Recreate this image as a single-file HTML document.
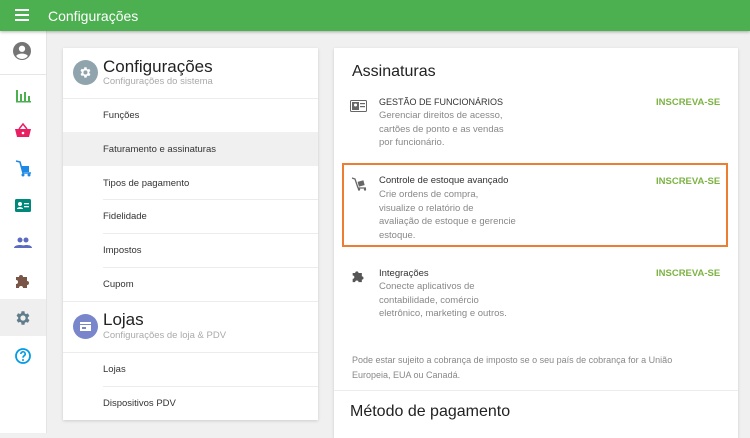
<!DOCTYPE html>
<html><head><meta charset="utf-8"><style>
*{margin:0;padding:0;box-sizing:border-box}
body{width:750px;height:433px;overflow:hidden;background:#f0f0f0;font-family:"Liberation Sans",sans-serif;position:relative;color:#333}
.hdr{position:absolute;left:0;top:0;width:750px;height:31px;background:#4caf50;box-shadow:0 1px 3px rgba(0,0,0,.3);z-index:2}
.hdr .t{position:absolute;left:48px;top:8px;color:#fff;font-size:14px}
.side{position:absolute;left:0;top:31px;width:47px;height:402px;background:#fff;border-right:1px solid #e4e4e4}
.ic{position:absolute;left:14px;width:18px;height:18px}
.card{position:absolute;background:#fff;box-shadow:0 1px 3px rgba(0,0,0,.15)}
.it{position:absolute;left:40px;font-size:9.5px;color:#333}
.ln{position:absolute;left:40px;right:0;height:1px;background:#ececec}
.abs{position:absolute}
.g{color:#888;font-size:9.5px;line-height:13.5px}
.ins{position:absolute;left:322px;color:#7cb342;font-weight:bold;font-size:9.5px}
</style></head><body>
<div class="hdr">
<svg class="abs" style="left:15px;top:9px" width="14" height="12"><rect y="0" width="14" height="2" fill="#fff"/><rect y="5" width="14" height="2" fill="#fff"/><rect y="10" width="14" height="2" fill="#fff"/></svg>
<div class="t">Configurações</div></div>
<div class="side">
<svg class="ic" style="top:11px;left:13px" width="20" height="20" viewBox="0 0 20 20"><circle cx="10" cy="10" r="10" fill="#757575"/><circle cx="10" cy="7.5" r="3.5" fill="#fff"/><path d="M3.5 15.5c2-3.5 11-3.5 13 0a8 8 0 0 1-13 0z" fill="#fff"/></svg>
<div class="abs" style="left:0;top:43px;width:46px;height:1px;background:#e6e6e6"></div>
<svg class="ic" style="top:55px" viewBox="0 0 18 18"><path d="M2 4h2v11H2zM6 8h2v7H6zM10 6h2v9h-2zM14 10h2v5h-2zM2 15h15v1.5H2z" fill="#4caf50"/></svg>
<svg class="ic" style="top:91px" viewBox="0 0 18 18"><path d="M1 7h16l-2 8H3z" fill="#e91e63"/><path d="M5 7l4-5 4 5" stroke="#e91e63" stroke-width="1.5" fill="none"/><circle cx="9" cy="11" r="1.3" fill="#fff"/></svg>
<svg class="ic" style="top:128px" viewBox="0 0 18 18"><path d="M2 2l4 1 3 11h8" stroke="#1e88e5" stroke-width="1.6" fill="none"/><rect x="8" y="7" width="7" height="6" fill="#1e88e5"/><circle cx="9" cy="16" r="1.5" fill="#1e88e5"/><circle cx="15" cy="16" r="1.5" fill="#1e88e5"/></svg>
<svg class="ic" style="top:166px" viewBox="0 0 18 18"><rect x="1" y="2" width="16" height="13" rx="1.5" fill="#00897b"/><circle cx="6" cy="7" r="2" fill="#fff"/><path d="M3 12c0-2.5 6-2.5 6 0z" fill="#fff"/><rect x="10" y="6" width="5" height="1.3" fill="#fff"/><rect x="10" y="9" width="5" height="1.3" fill="#fff"/></svg>
<svg class="ic" style="top:203px" viewBox="0 0 18 18"><circle cx="6" cy="6" r="2.5" fill="#5c6bc0"/><circle cx="12" cy="6" r="2.5" fill="#5c6bc0"/><path d="M0 14c0-4 12-4 12 0zM7 14c0-4 11-4 11 0z" fill="#5c6bc0"/></svg>
<svg class="ic" style="top:240px" viewBox="0 0 18 18"><path d="M2 6h3a2 2 0 1 1 4 0h4v4a2 2 0 1 1 0 4v3H9a2 2 0 1 0-4 0H2v-4a2 2 0 1 0 0-4z" fill="#795548"/></svg>
<div class="abs" style="left:0;top:268px;width:46px;height:37px;background:#efefef"></div>
<svg class="ic" style="top:278px" viewBox="0 0 24 24"><path fill="#607d8b" d="M19.4 13a7.5 7.5 0 0 0 0-2l2.1-1.6-2-3.5-2.5 1a7 7 0 0 0-1.7-1L15 3h-4l-.4 2.7a7 7 0 0 0-1.7 1l-2.5-1-2 3.5L6.6 11a7.5 7.5 0 0 0 0 2l-2.1 1.6 2 3.5 2.5-1a7 7 0 0 0 1.7 1L11 21h4l.4-2.7a7 7 0 0 0 1.7-1l2.5 1 2-3.5zM13 15.5a3.5 3.5 0 1 1 0-7 3.5 3.5 0 0 1 0 7z" transform="translate(-1 0)"/></svg>
<svg class="ic" style="top:316px" viewBox="0 0 18 18"><circle cx="9" cy="9" r="7" stroke="#039be5" stroke-width="1.8" fill="none"/><path d="M6.8 7a2.2 2.2 0 1 1 3 2c-.7.4-.8.8-.8 1.8" stroke="#039be5" stroke-width="1.6" fill="none"/><circle cx="9" cy="13" r="1" fill="#039be5"/></svg>
</div>

<div class="card" style="left:63px;top:48px;width:255px;height:372px">
<svg class="abs" style="left:10px;top:12px" width="25" height="25" viewBox="0 0 25 25"><circle cx="12.5" cy="12.5" r="12.5" fill="#90a4ae"/><g transform="translate(5.5 5.5) scale(.58)"><path fill="#fff" d="M19.4 13a7.5 7.5 0 0 0 0-2l2.1-1.6-2-3.5-2.5 1a7 7 0 0 0-1.7-1L15 3h-4l-.4 2.7a7 7 0 0 0-1.7 1l-2.5-1-2 3.5L6.6 11a7.5 7.5 0 0 0 0 2l-2.1 1.6 2 3.5 2.5-1a7 7 0 0 0 1.7 1L11 21h4l.4-2.7a7 7 0 0 0 1.7-1l2.5 1 2-3.5zM13 15.5a3.5 3.5 0 1 1 0-7 3.5 3.5 0 0 1 0 7z" transform="translate(-1 0)"/></g></svg>
<div class="abs" style="left:40px;top:9px;font-size:17px;color:#222">Configurações</div>
<div class="abs" style="left:40px;top:28px;font-size:9.5px;color:#aaa">Configurações do sistema</div>
<div class="abs" style="left:0;right:0;top:50px;height:1px;background:#ececec"></div>
<div class="it" style="top:62px">Funções</div>
<div class="ln" style="top:84px"></div>
<div class="abs" style="left:0;right:0;top:84px;height:34px;background:#f0f0f0"></div>
<div class="it" style="top:96px">Faturamento e assinaturas</div>
<div class="it" style="top:130px">Tipos de pagamento</div>
<div class="ln" style="top:151px"></div>
<div class="it" style="top:163px">Fidelidade</div>
<div class="ln" style="top:185px"></div>
<div class="it" style="top:197px">Impostos</div>
<div class="ln" style="top:219px"></div>
<div class="it" style="top:231px">Cupom</div>
<div class="abs" style="left:0;right:0;top:253px;height:1px;background:#ececec"></div>
<svg class="abs" style="left:10px;top:266px" width="25" height="25" viewBox="0 0 25 25"><circle cx="12.5" cy="12.5" r="12.5" fill="#7986cb"/><rect x="7" y="8" width="11" height="2" fill="#fff"/><rect x="7" y="11" width="11" height="6" fill="#fff"/><rect x="9" y="13" width="4" height="2" fill="#7986cb"/></svg>
<div class="abs" style="left:40px;top:262px;font-size:17px;color:#222">Lojas</div>
<div class="abs" style="left:40px;top:282px;font-size:9.5px;color:#aaa">Configurações de loja &amp; PDV</div>
<div class="abs" style="left:0;right:0;top:304px;height:1px;background:#ececec"></div>
<div class="it" style="top:316px">Lojas</div>
<div class="ln" style="top:338px"></div>
<div class="it" style="top:350px">Dispositivos PDV</div>
</div>

<div class="card" style="left:334px;top:48px;width:404px;height:390px">
<div class="abs" style="left:18px;top:15px;font-size:16px;color:#222">Assinaturas</div>
<svg class="abs" style="left:16px;top:52px" width="17" height="12" viewBox="0 0 17 12"><rect x=".5" y=".5" width="16" height="11" rx="1" fill="none" stroke="#666"/><rect x="2" y="2" width="7" height="8" fill="#666"/><circle cx="5.5" cy="5" r="1.5" fill="#fff"/><rect x="10" y="3" width="5" height="1.2" fill="#666"/><rect x="10" y="6" width="5" height="1.2" fill="#666"/></svg>
<div class="abs" style="left:45px;top:49px;font-size:9px;color:#333">GESTÃO DE FUNCIONÁRIOS</div>
<div class="abs g" style="left:45px;top:61px">Gerenciar direitos de acesso,<br>cartões de ponto e as vendas<br>por funcionário.</div>
<div class="ins" style="top:49px">INSCREVA-SE</div>
<div class="abs" style="left:8px;top:115px;width:386px;height:84px;border:2px solid #ed7d31"></div>
<svg class="abs" style="left:17px;top:129px" width="16" height="14" viewBox="0 0 16 14"><path d="M1 1l3 1 3 9h8" stroke="#666" stroke-width="1.3" fill="none"/><rect x="7" y="4" width="6" height="5" fill="#666" transform="rotate(-15 10 6)"/><circle cx="8" cy="12.5" r="1.2" fill="#666"/><circle cx="14" cy="12.5" r="1.2" fill="#666"/></svg>
<div class="abs" style="left:45px;top:127px;font-size:9.5px;color:#333">Controle de estoque avançado</div>
<div class="abs g" style="left:45px;top:140px">Crie ordens de compra,<br>visualize o relatório de<br>avaliação de estoque e gerencie<br>estoque.</div>
<div class="ins" style="top:128px">INSCREVA-SE</div>
<svg class="abs" style="left:17px;top:220px" width="15" height="15" viewBox="0 0 18 18"><path d="M2 6h3a2 2 0 1 1 4 0h4v4a2 2 0 1 1 0 4v3H9a2 2 0 1 0-4 0H2v-4a2 2 0 1 0 0-4z" fill="#555"/></svg>
<div class="abs" style="left:45px;top:220px;font-size:9.5px;color:#333">Integrações</div>
<div class="abs g" style="left:45px;top:232px">Conecte aplicativos de<br>contabilidade, comércio<br>eletrônico, marketing e outros.</div>
<div class="ins" style="top:220px">INSCREVA-SE</div>
<div class="abs g" style="left:18px;top:305px;font-size:9px;line-height:15px">Pode estar sujeito a cobrança de imposto se o seu país de cobrança for a União<br>Europeia, EUA ou Canadá.</div>
<div class="abs" style="left:0;right:0;top:342px;height:1px;background:#ececec"></div>
<div class="abs" style="left:16px;top:355px;font-size:16px;color:#222">Método de pagamento</div>
</div>
</body></html>
